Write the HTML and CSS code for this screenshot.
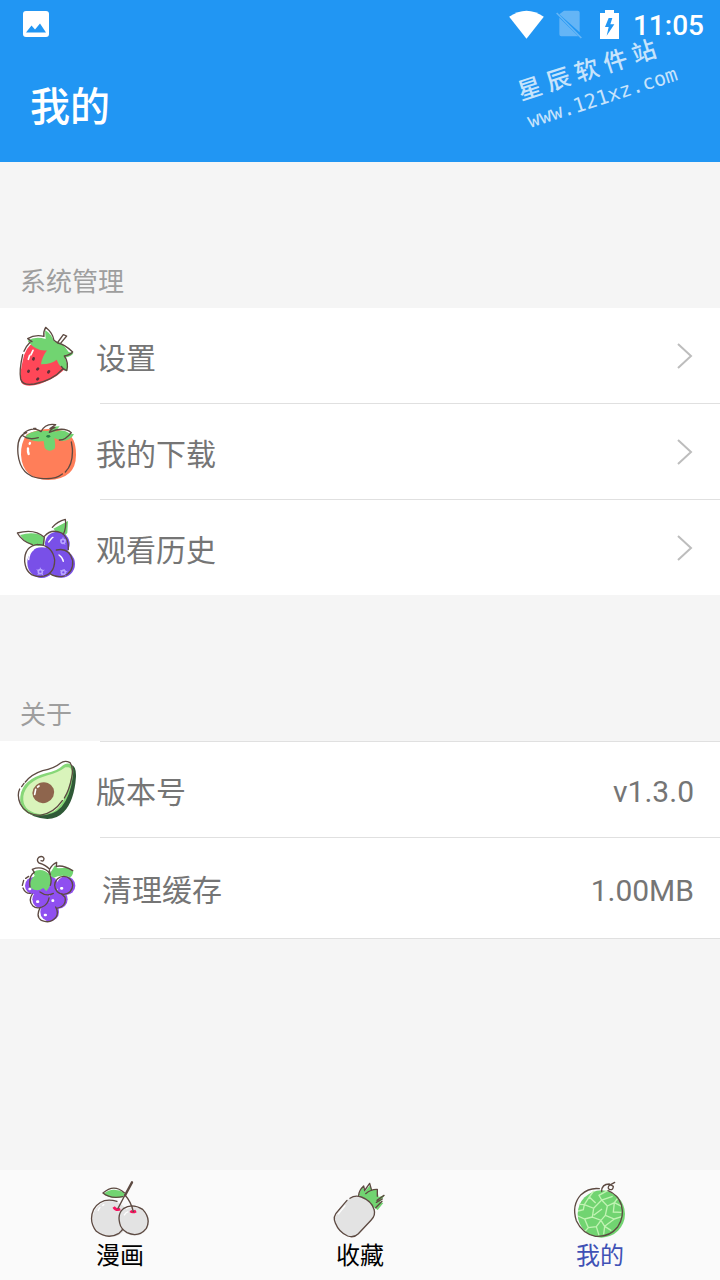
FILE: index.html
```html
<!DOCTYPE html>
<html lang="zh-CN">
<head>
    <meta charset="UTF-8">
    <meta name="viewport" content="width=device-width, initial-scale=1.0">
    <title>我的</title>
    <link rel="stylesheet" href="styles.css">
</head>
<body>
    <header class="header">
        <div class="status">
            <svg class="status-photo" viewBox="0 0 26 26">
                <rect width="26" height="26" rx="3" fill="#fff"/>
                <path d="M3 21.500 8.500 14.500 12 18.500 17 12.500 23 21.500z" fill="#2196f3"/>
            </svg>
            <svg class="status-wifi" viewBox="26 28 104 87">
                <path d="M26 48Q78 12 130 48L78 114z" fill="#fff"/>
            </svg>
            <svg class="status-sim" viewBox="167 31 78 87">
                <path d="M191 33H232Q238 33 238 39V98L177 44zM177 54 234 110H183Q177 110 177 104z" fill="#64b5f6"/>
                <path d="M169 40 243 115" stroke="#64b5f6" stroke-width="5"/>
            </svg>
            <svg class="status-battery" viewBox="300 27 57 87">
                <path fill-rule="evenodd" d="M300 36H315V27H342V36H357V114H300zM326 51 315 78H326L320 104 343 70H331L337 51z" fill="#fff"/>
            </svg>
            <time class="clock">11:05</time>
        </div>
        <h1 class="title">我的</h1>
        <div class="mark">
            <div class="mark-name"><span>星</span><span>辰</span><span>软</span><span>件</span><span>站</span></div>
            <div class="mark-url">www.121xz.com</div>
        </div>
    </header>

    <main class="main">
        <h2 class="group-name">系统管理</h2>
        <ul class="list">
            <li>
                <a class="row" href="#settings">
                    <!-- strawberry -->
                    <svg class="icon" viewBox="48 42 192 192">
                        <path d="M102 97Q76 111 68 153Q56 207 65 219Q78 234 119 222Q178 202 201 168L182 125z" fill="#ff4758"/>
                        <path d="M83 92Q105 78 137 87L135 61Q153 70 162 94Q183 91 206 126L220 130Q215 140 194 143Q205 163 202 183Q179 174 170 149Q158 161 123 163Q125 143 141 121Q110 125 86 97z" fill="#71d471"/>
                        <g class="ink">
                            <path d="M90 97Q78 109 72 124M68 134Q57 182 62 207Q68 228 103 222Q159 211 188 177M83 86Q105 72 132 79Q129 66 137 52Q158 69 162 91L173 99Q194 103 218 126Q210 135 193 138Q207 158 200 182Q189 178 184 169M83 86 96 95M174 96 190 74 200 78 181 101"/>
                        </g>
                        <path d="M99 121 93 134M89 136 85 148" stroke="#fff" stroke-width="5" stroke-linecap="round"/>
                        <path d="M101 145 100 148M86 183 85 185M114 176 112 178M147 184 145 187M114 206 112 208" stroke="#5b3038" stroke-width="8" stroke-linecap="round"/>
                    </svg>
                    <span class="label">设置</span>
                    <svg class="arrow" viewBox="0 0 18 28"><path d="M2 2 15 14 2 26"/></svg>
                </a>
            </li>
            <li>
                <a class="row" href="#downloads">
                    <!-- persimmon -->
                    <svg class="icon" viewBox="48 45 192 192">
                        <path d="M80 88Q62 116 63 149Q67 223 145 225Q228 222 228 150Q229 94 192 79Q137 62 80 88z" fill="#ff7e59"/>
                        <path d="M75 97Q84 81 115 77L145 78Q160 62 179 64L165 81Q190 71 208 85L222 88Q211 108 185 108L163 99Q168 127 163 132Q146 144 134 129L131 108Q97 113 75 97z" fill="#71d471"/>
                        <g class="ink">
                            <path d="M80 83Q49 91 54 147Q61 214 121 220Q165 225 187 207M196 201Q220 176 217 130L214 111M72 84Q94 66 117 76L123 80Q136 53 167 59L150 71 165 67Q150 74 148 82L167 75Q197 68 214 83Q196 106 178 105M67 91Q86 107 115 98M101 70 108 70"/>
                        </g>
                        <ellipse cx="145" cy="94" rx="6" ry="4" fill="#278044"/>
                        <path d="M90 114 89 116M84 130Q83 140 86 147" fill="none" stroke="#fff" stroke-width="7" stroke-linecap="round"/>
                    </svg>
                    <span class="label">我的下载</span>
                    <svg class="arrow" viewBox="0 0 18 28"><path d="M2 2 15 14 2 26"/></svg>
                </a>
            </li>
            <li>
                <a class="row" href="#history">
                    <!-- blueberries -->
                    <svg class="icon" viewBox="48 48 192 192">
                        <path d="M60 105Q108 92 133 113V136Q87 147 60 105zM160 86 204 63 202 98Q196 111 178 104z" fill="#71d471"/>
                        <g fill="#7950e8">
                            <circle cx="172" cy="132" r="37"/>
                            <circle cx="184" cy="192" r="41"/>
                            <ellipse cx="125" cy="188" rx="43" ry="46"/>
                        </g>
                        <g class="ink">
                            <path d="M97 134Q66 124 52 99Q104 85 133 112L130 134M157 82Q172 64 196 58Q200 81 190 103M133 109Q154 85 185 99Q207 113 205 149M113 133Q72 139 74 185Q79 230 121 230Q164 226 164 180Q158 136 113 133M169 150Q208 141 218 182Q221 219 189 229Q166 233 151 221"/>
                        </g>
                        <path d="M86 179Q88 157 100 149M146 126 155 115 159 112M177 165Q189 174 190 184" fill="none" stroke="#fff" stroke-width="4" stroke-linecap="round"/>
                        <g fill="none" stroke="#b9a5ff" stroke-width="5">
                            <circle cx="121" cy="215" r="6"/><circle cx="190" cy="217" r="6"/><circle cx="189" cy="124" r="6"/>
                            <path stroke-width="3" d="M110 209 116 212M121 203V210M133 210 126 213M129 226 124 219M113 225 118 219M181 211 187 215M193 207 191 212M202 214 195 217M196 227 191 221M184 226 187 220M180 120 186 122M189 112V119M198 120 192 122M195 134 191 128"/>
                        </g>
                    </svg>
                    <span class="label">观看历史</span>
                    <svg class="arrow" viewBox="0 0 18 28"><path d="M2 2 15 14 2 26"/></svg>
                </a>
            </li>
        </ul>

        <h2 class="group-name">关于</h2>
        <ul class="list list-about">
            <li>
                <div class="row">
                    <!-- avocado -->
                    <svg class="icon" viewBox="48 54 192 192">
                        <path d="M214 75Q229 78 228 110Q223 183 191 216Q159 250 102 229L84 219 194 110z" fill="#2f5937"/>
                        <path d="M214 75Q222 81 219 108Q211 169 185 200Q157 232 97 225Q56 213 61 169Q66 118 140 99Q171 94 189 76Q202 66 214 75z" fill="#87d778"/>
                        <path d="M205 82Q219 83 214 112Q204 170 175 203Q154 226 113 221Q66 212 70 169Q77 124 143 106Q175 98 196 82z" fill="#d9f4bb"/>
                        <ellipse cx="130" cy="158" rx="33" ry="31" transform="rotate(-22 130 158)" fill="#8e654d"/>
                        <g class="ink">
                            <path d="M65 140 72 130M76 126Q94 103 128 92Q162 86 181 70Q194 59 210 68Q222 83 215 113Q208 150 193 174M187 182Q160 221 120 226Q77 225 61 192Q50 166 59 147"/>
                        </g>
                        <path d="M117 138 113 141M107 148 104 163" stroke="#fff" stroke-width="5" stroke-linecap="round"/>
                    </svg>
                    <span class="label">版本号</span>
                    <span class="value">v1.3.0</span>
                </div>
            </li>
            <li>
                <button class="row row-cache" type="button">
                    <!-- grapes -->
                    <svg class="icon-cache" viewBox="48 42 210 216">
                        <g fill="#8f4ff0">
                            <circle cx="101" cy="143" r="26"/><circle cx="145" cy="142" r="29"/><circle cx="198" cy="143" r="28"/>
                            <circle cx="124" cy="184" r="27"/><circle cx="175" cy="184" r="28"/><circle cx="149" cy="222" r="28"/>
                        </g>
                        <path d="M99 102Q126 87 148 109L153 122Q156 139 139 160L130 150Q112 164 91 149Q87 126 104 113zM149 108 165 82 173 91 207 89 220 98Q219 112 211 118Q184 108 160 120z" fill="#71d471"/>
                        <g class="ink">
                            <path d="M123 68Q132 72 132 61Q127 52 116 58Q108 67 117 75Q138 81 149 94Q156 79 170 73L169 85Q190 80 218 98M148 97 151 110M103 103 97 94Q124 83 145 101Q158 120 151 142M103 103Q85 114 90 147M86 115 77 121M71 127 67 142M69 150Q76 167 91 166M120 162Q140 177 160 166M97 168Q84 188 98 203Q109 214 126 207Q144 200 147 180M185 168 195 178Q201 205 169 211M121 208Q106 235 124 247Q153 259 169 236Q176 223 167 207"/>
                            <circle cx="191" cy="142" r="27"/>
                        </g>
                        <path d="M89 153H90M184 151H186M112 191H114M158 188H159M135 231H137" stroke="#fff" stroke-width="8" stroke-linecap="round"/>
                    </svg>
                    <span class="label">清理缓存</span>
                    <span class="value">1.00MB</span>
                </button>
            </li>
        </ul>
    </main>

    <nav class="tabs">
        <a class="tab" href="#comics">
            <!-- cherries -->
            <svg class="tab-icon" viewBox="54 39 192 192">
                <g fill="#e3e3e3"><circle cx="122" cy="162" r="54"/><circle cx="194" cy="169" r="43"/></g>
                <path d="M101 86Q128 63 165 84L160 96Q124 105 101 86z" fill="#71d471"/>
                <path d="M131 126Q137 137 151 133M181 138Q188 144 198 138" fill="none" stroke="#f5145f" stroke-width="8"/>
                <g class="ink">
                    <path d="M141 109Q94 95 71 133Q55 168 79 199Q113 225 147 205Q156 197 158 192M149 174Q142 145 160 131Q186 113 218 133Q244 161 229 190Q206 219 171 203Q152 191 149 174M99 84Q131 55 163 83M99 84Q119 102 158 95M165 90 144 130M165 90Q183 110 190 140"/>
                    <path d="M165 91 186 52" stroke-width="7"/>
                </g>
                <path d="M84 138Q87 130 91 127M97 122 103 118M162 151Q168 141 175 140" fill="none" stroke="#fff" stroke-width="4"/>
            </svg>
            <span>漫画</span>
        </a>
        <a class="tab" href="#favorites">
            <!-- pineapple -->
            <svg class="tab-icon" viewBox="54 39 192 192">
                <path d="M146 91 157 65 165 79 181 60 184 74 201 73 206 96 224 91 210 111 220 114 203 135 190 126 159 98z" fill="#71d471"/>
                <path d="M117 101Q133 91 157 96Q190 111 195 143Q195 154 188 163L147 207Q130 220 110 211Q80 198 75 171Q73 157 81 147z" fill="#e3e3e3"/>
                <g class="ink">
                    <path d="M111 106 84 138Q67 154 76 174Q87 202 113 213Q131 220 145 206L183 166Q198 151 192 133Q184 107 154 96Q135 89 120 100M146 91Q147 76 161 63L164 77M165 75 179 55 185 76M167 86Q183 72 202 73L202 94M201 106 222 91M199 112 217 102M197 128 216 109"/>
                </g>
                <path d="M84 148 106 121" stroke="#fff" stroke-width="4"/>
            </svg>
            <span>收藏</span>
        </a>
        <a class="tab active" href="#me" aria-current="page">
            <!-- melon -->
            <svg class="tab-icon" viewBox="54 39 192 192">
                <circle cx="154" cy="147" r="71" fill="#71d471"/>
                <path d="M88 118 103 119 118 96 131 78M103 119 131 130 155 105 188 94M118 96 137 114M155 105 147 91 174 76M155 105 172 123 193 113 205 97M172 123 166 151 193 162 215 155M131 130 127 156 153 166 166 151M127 156 104 162 84 153M104 162 115 188 103 201M115 188 139 185 153 166M139 185 147 211M153 166 164 184 161 208M164 184 184 197M164 184 193 162M84 138 100 134 103 119M193 113 215 124M193 113 190 141 215 142M131 151 156 132" fill="none" stroke="#c1f3b3" stroke-width="4"/>
                <g class="ink">
                    <path d="M148 71Q118 67 93 89Q64 121 79 167Q97 206 137 214Q178 217 203 186Q224 155 214 119Q204 89 174 77M155 79Q155 57 178 57L190 64Q190 75 180 74Q171 71 177 62L194 52"/>
                </g>
            </svg>
            <span>我的</span>
        </a>
    </nav>
</body>
</html>
```

FILE: styles.css
```css
* {
    box-sizing: border-box;
}

body {
    margin: 0;
    min-height: 100vh;
    display: flex;
    flex-direction: column;
    background: #f5f5f5;
    color: #757575;
    font-family: Roboto, "Noto Sans CJK SC", sans-serif;
}

.header {
    position: relative;
    background: #2196f3;
    color: #fff;
}

.status {
    display: flex;
    align-items: center;
    height: 48px;
    padding: 0 16px 0 23px;
}

.status-photo {
    width: 26px;
    height: 26px;
    margin-right: auto;
}

.status-wifi {
    width: 35px;
    height: 29px;
    margin-right: 12px;
}

.status-sim {
    width: 26px;
    height: 29px;
    margin-right: 18px;
}

.status-battery {
    width: 19px;
    height: 29px;
    margin-right: 14px;
}

.clock {
    font-size: 28px;
    font-weight: 500;
    line-height: 48px;
    padding-top: 3px;
}

.title {
    margin: 0;
    padding: 6px 30px 0;
    font-size: 40px;
    font-weight: 500;
    line-height: 108px;
}

/* site mark, laid over the header */
.mark {
    position: absolute;
    top: 52px;
    right: 44px;
    color: #fff;
    opacity: 0.75;
    transform: rotate(-18deg);
}

.mark-name {
    display: flex;
    gap: 6px;
    font-size: 24px;
    font-weight: 500;
    line-height: 32px;
}

.mark-url {
    font-family: "DejaVu Sans Mono", monospace;
    font-size: 20px;
    line-height: 28px;
}

.main {
    flex: 1;
}

.group-name {
    margin: 0;
    padding: 100px 20px 6px;
    font-size: 26px;
    font-weight: 400;
    line-height: 40px;
    color: #9e9e9e;
}

.list {
    margin: 0;
    padding: 0;
    list-style: none;
    background: #fff;
}

.list li::after,
.list-about::before {
    content: "";
    display: block;
    height: 1px;
    margin-left: 100px;
    background: #e0e0e0;
}

.list:not(.list-about) li:last-child::after {
    display: none;
}

.row {
    display: flex;
    align-items: center;
    width: 100%;
    height: 95px;
    padding: 0 26px 0 16px;
    border: 0;
    background: none;
    color: inherit;
    font: inherit;
    font-size: 30px;
    text-align: left;
    text-decoration: none;
}

.row-cache {
    height: 100px;
}

.icon {
    width: 64px;
    height: 64px;
}

.icon-cache {
    width: 70px;
    height: 72px;
}

.ink {
    fill: none;
    stroke: #5d4a42;
    stroke-width: 4;
    stroke-linecap: round;
    stroke-linejoin: round;
}

.label {
    flex: 1;
    padding: 0 16px;
}

.value {
    padding-top: 4px;
}

.arrow {
    width: 18px;
    height: 28px;
    fill: none;
    stroke: #bdbdbd;
    stroke-width: 2;
}

.tabs {
    display: flex;
    height: 110px;
    background: #fafafa;
}

.tab {
    flex: 1;
    display: flex;
    flex-direction: column;
    align-items: center;
    padding-top: 8px;
    color: #000;
    font-size: 24px;
    line-height: 28px;
    text-decoration: none;
}

.tab-icon {
    width: 64px;
    height: 64px;
}

.active {
    color: #3f51b5;
}
```
